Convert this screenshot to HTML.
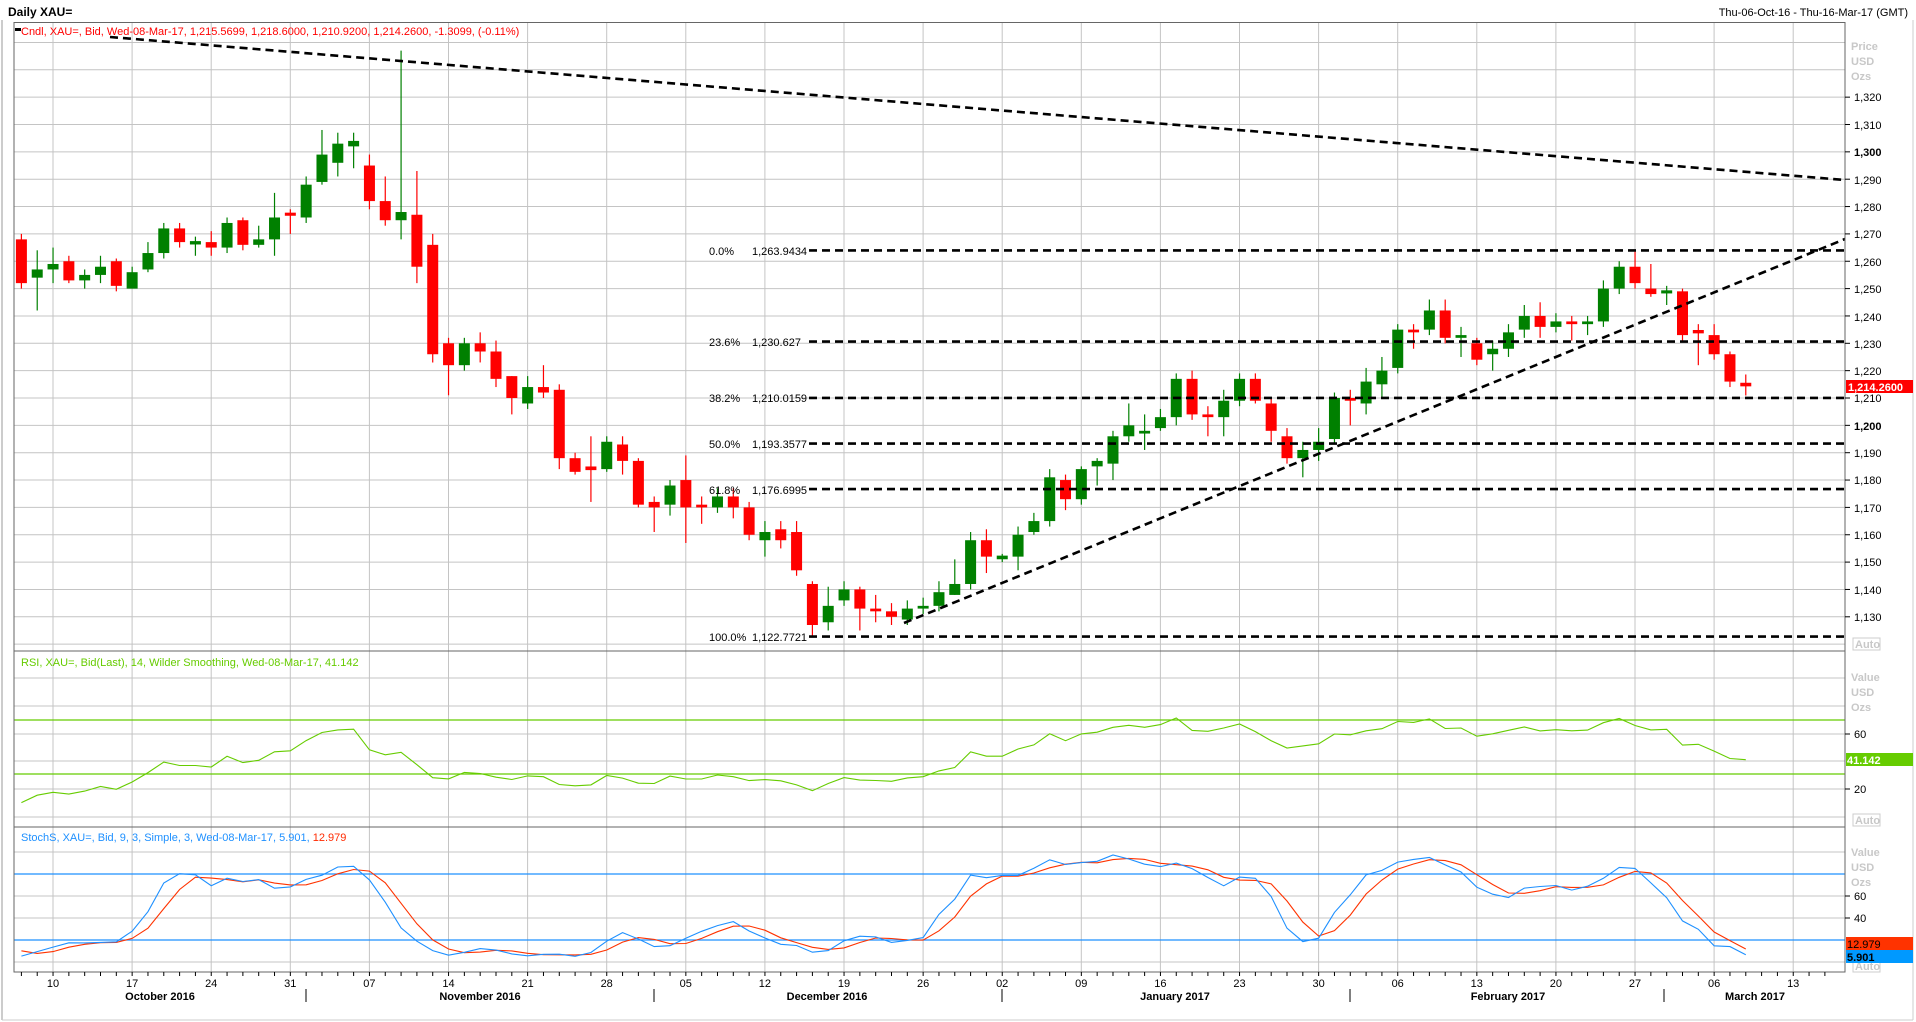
<!DOCTYPE html>
<html><head><meta charset="utf-8"><style>
html,body{margin:0;padding:0;background:#fff;width:1916px;height:1022px;overflow:hidden}
svg{display:block;font-family:"Liberation Sans",sans-serif}
</style></head><body>
<svg id="s" width="1916" height="1022" xmlns="http://www.w3.org/2000/svg">
<rect x="0" y="0" width="1916" height="1022" fill="#fff"/>
<line x1="2" y1="20" x2="2" y2="1020" stroke="#999"/>
<line x1="1913" y1="20" x2="1913" y2="1020" stroke="#ccc"/>
<line x1="2" y1="1020" x2="1913" y2="1020" stroke="#ccc"/>
<text x="8" y="16" font-size="12" font-weight="bold" fill="#000">Daily XAU=</text>
<text x="1908" y="16" font-size="11" fill="#000" text-anchor="end">Thu-06-Oct-16 - Thu-16-Mar-17 (GMT)</text>
<g id="grid"></g>
<g id="draw"></g>
<rect x="14" y="22.5" width="1831" height="949.5" fill="none" stroke="#666"/>
<line x1="14" y1="651" x2="1845" y2="651" stroke="#666"/>
<line x1="14" y1="827" x2="1845" y2="827" stroke="#666"/>
<rect x="15" y="28" width="6" height="3" fill="#000"/>
<text x="21" y="35" font-size="11" fill="#ff0000">Cndl, XAU=, Bid, Wed-08-Mar-17, 1,215.5699, 1,218.6000, 1,210.9200, 1,214.2600, -1.3099, (-0.11%)</text>
<text x="21" y="666" font-size="11" fill="#66cc00">RSI, XAU=, Bid(Last),  14, Wilder Smoothing, Wed-08-Mar-17, 41.142</text>
<text x="21" y="841" font-size="11" fill="#1e90ff">StochS, XAU=, Bid,  9, 3, Simple, 3, Wed-08-Mar-17, 5.901, <tspan fill="#ff2a00">12.979</tspan></text>
<g font-size="11" font-weight="bold" fill="#c8c8c8">
<text x="1851" y="50">Price</text><text x="1851" y="65">USD</text><text x="1851" y="80">Ozs</text>
<text x="1851" y="681">Value</text><text x="1851" y="696">USD</text><text x="1851" y="711">Ozs</text>
<text x="1851" y="856">Value</text><text x="1851" y="871">USD</text><text x="1851" y="886">Ozs</text>
</g>
<g font-size="11" fill="#c8c8c8" font-weight="bold">
<rect x="1853" y="638" width="27" height="12" fill="#fff" stroke="#ccc"/><text x="1855" y="648">Auto</text>
<rect x="1853" y="814" width="27" height="12" fill="#fff" stroke="#ccc"/><text x="1855" y="824">Auto</text>
<rect x="1853" y="960" width="27" height="12" fill="#fff" stroke="#ccc"/><text x="1855" y="970">Auto</text>
</g>
<g id="axis" font-size="11" fill="#000"></g>
<rect x="1846" y="380" width="67" height="13" fill="#ff0000"/>
<text x="1848" y="391" font-size="11" font-weight="bold" fill="#fff">1,214.2600</text>
<rect x="1846" y="753" width="67" height="13" fill="#66cc00"/>
<text x="1847" y="764" font-size="11" font-weight="bold" fill="#fff">41.142</text>
<rect x="1846" y="937" width="67" height="13" fill="#ff3300"/>
<text x="1847" y="948" font-size="11" fill="#000">12.979</text>
<rect x="1846" y="950" width="67" height="13" fill="#0099ff"/>
<text x="1847" y="961" font-size="11" font-weight="bold" fill="#000">5.901</text>
<g font-size="11" fill="#000">
<text x="709" y="255">0.0%</text><text x="752" y="255">1,263.9434</text>
<text x="709" y="346">23.6%</text><text x="752" y="346">1,230.627</text>
<text x="709" y="402">38.2%</text><text x="752" y="402">1,210.0159</text>
<text x="709" y="448">50.0%</text><text x="752" y="448">1,193.3577</text>
<text x="709" y="494">61.8%</text><text x="752" y="494">1,176.6995</text>
<text x="709" y="641">100.0%</text><text x="752" y="641">1,122.7721</text>
</g>
<g fill="#000" font-size="11">
<text x="1854" y="101">1,320</text><text x="1854" y="129">1,310</text><text x="1854" y="156" font-weight="bold">1,300</text>
<text x="1854" y="184">1,290</text><text x="1854" y="211">1,280</text><text x="1854" y="238">1,270</text>
<text x="1854" y="266">1,260</text><text x="1854" y="293">1,250</text><text x="1854" y="321">1,240</text>
<text x="1854" y="348">1,230</text><text x="1854" y="375">1,220</text><text x="1854" y="402">1,210</text>
<text x="1854" y="430" font-weight="bold">1,200</text><text x="1854" y="457">1,190</text><text x="1854" y="484">1,180</text>
<text x="1854" y="512">1,170</text><text x="1854" y="539">1,160</text><text x="1854" y="566">1,150</text>
<text x="1854" y="594">1,140</text><text x="1854" y="621">1,130</text>
<text x="1854" y="738">60</text><text x="1854" y="793">20</text>
<text x="1854" y="900">60</text><text x="1854" y="922">40</text>
</g>
<g fill="#000" font-size="11" font-weight="bold" text-anchor="middle">
<text x="160" y="1000">October 2016</text><text x="480" y="1000">November 2016</text>
<text x="827" y="1000">December 2016</text><text x="1175" y="1000">January 2017</text>
<text x="1508" y="1000">February 2017</text><text x="1755" y="1000">March 2017</text>
</g>
</svg>
<script>
var D=[
[1268,1270,1250,1252],[1254,1264,1242,1257],
[1257,1265,1252,1259],[1260,1262,1252,1253],[1253,1257,1250,1255],[1255,1262,1252,1258],[1260,1261,1249,1251],
[1250,1258,1250,1256],[1257,1267,1256,1263],[1263,1274,1261,1272],[1272,1274,1265,1267],[1266.5,1269,1262,1267],
[1267,1271,1262,1265],[1265,1276,1263,1274],[1275,1276,1264,1266],[1266,1273,1265,1268],[1268,1285,1262,1276],
[1277.4,1279,1270,1277],[1276,1291,1274,1288],[1289,1308,1288,1299],[1296,1307,1291,1303],[1302,1307,1294,1304],
[1295,1299,1279,1282],[1282,1291,1273,1275],[1275,1337,1268,1278],[1277,1293,1252,1258],[1266,1270,1223,1226],
[1230,1232,1211,1222],[1222,1232,1220,1230],[1230,1234,1223,1227],[1227,1231,1214,1217],[1218,1218,1204,1210],
[1208,1218,1206,1214],[1214,1222,1210,1212],[1213,1215,1184,1188],[1188,1190,1182,1183],[1184.6,1196,1172,1184],
[1184,1196,1183,1194],[1193,1196,1182,1187],[1187,1188,1170,1171],[1172,1174,1161,1170],[1171,1180,1167,1178],
[1180,1189,1157,1170],[1171,1174,1164,1170],[1170,1177,1168,1174],[1174,1177,1166,1170],[1170,1172,1158,1160],
[1158,1165,1152,1161],[1162,1165,1155,1158],[1161,1165,1145,1147],[1142,1143,1123,1127],[1128,1141,1125,1134],
[1136,1143,1134,1140],[1140,1141,1125,1133],[1133,1138,1128,1132],[1132,1135,1127,1130],[1129,1136,1127,1133],
[1133,1137,1131,1134],[1134,1143,1132,1139],[1138,1151,1138,1142],[1142,1161,1140,1158],[1158,1162,1146,1152],
[1151.4,1153,1150,1152],[1152,1163,1147,1160],[1161,1168,1160,1165],[1165,1184,1163,1181],[1180,1182,1169,1173],
[1173,1185,1171,1184],[1185,1188,1178,1187],[1186,1198,1180,1196],[1196,1208,1194,1200],[1197,1204,1191,1198],
[1199,1206,1198,1203],[1203,1219,1200,1217],[1217,1220,1202,1204],[1204,1207,1196,1203],[1203,1213,1196,1209],
[1209,1219,1207,1217],[1217,1219,1208,1209],[1208,1210,1194,1198],[1196,1199,1186,1188],[1188,1194,1181,1191],
[1191,1199,1187,1194],[1195,1212,1193,1210],[1210,1213,1200,1209],[1208,1221,1204,1216],[1215,1225,1210,1220],
[1221,1237,1219,1235],[1235,1237,1228,1234],[1235,1246,1233,1242],[1242,1246,1230,1232],[1232,1236,1225,1233],
[1230,1232,1222,1224],[1226,1231,1220,1228],[1228,1237,1225,1234],[1235,1244,1232,1240],[1240,1245,1232,1236],
[1236,1241,1234,1238],[1238,1240,1231,1237],[1237,1240,1233,1238],[1238,1253,1236,1250],[1250,1260,1248,1258],
[1258,1264,1250,1252],[1250,1259,1247,1248],[1248.6,1251,1244,1249],[1249,1250,1231,1233],[1234.5,1237,1222,1234],
[1233,1237,1224,1226],[1226,1227,1214,1216],[1215.57,1218.6,1210.92,1214.26]];
var PRE=[[1338,1320,1330],[1335,1318,1325],[1330,1315,1322],[1327,1312,1318],[1325,1310,1316],[1320,1300,1313],[1316,1304,1312],[1315,1290,1296],[1300,1262,1266],[1272,1262,1268]];
var NS="http://www.w3.org/2000/svg";
function el(p,t,a){var e=document.createElementNS(NS,t);for(var k in a)e.setAttribute(k,a[k]);p.appendChild(e);return e;}
var G=document.getElementById('grid'),W=document.getElementById('draw'),A=document.getElementById('axis');
function py(p){return 398-(p-1210)*2.735;}
function X(i){return 21.4+i*15.82;}
var gc="#c4c4c4";
for(var p=1120;p<=1340;p+=10){var y=py(p);if(y>23&&y<651)el(G,'line',{x1:14,x2:1845,y1:y,y2:y,stroke:gc});}
[678,706,734,761,789,817].forEach(function(y){el(G,'line',{x1:14,x2:1845,y1:y,y2:y,stroke:gc});});
[852,874,896,918,940,962].forEach(function(y){el(G,'line',{x1:14,x2:1845,y1:y,y2:y,stroke:gc});});
var labs=["10","17","24","31","07","14","21","28","05","12","19","26","02","09","16","23","30","06","13","20","27","06","13"];
for(var i=0;i<23;i++){var x=53+79.1*i;el(G,'line',{x1:x,x2:x,y1:23,y2:972,stroke:gc});
 var t=el(A,'text',{x:x,y:987,'text-anchor':'middle'});t.textContent=labs[i];}
for(var i=-2;i<115;i++){var x=21.4+i*15.82;if(x>14&&x<1845)el(A,'line',{x1:x,x2:x,y1:972,y2:976,stroke:'#000'});}
[306,654,1002,1350,1664].forEach(function(x){el(A,'line',{x1:x,x2:x,y1:989,y2:1002,stroke:'#000'});});
for(var p=1130;p<=1320;p+=10)el(A,'line',{x1:1845,x2:1850,y1:py(p),y2:py(p),stroke:'#000'});
[734,789,896,918].forEach(function(y){el(A,'line',{x1:1845,x2:1850,y1:y,y2:y,stroke:'#000'});});
D.forEach(function(d,i){var x=X(i),o=d[0],h=d[1],l=d[2],c=d[3];var col=c>=o?'#008000':'#ff0000';
 if(Math.abs(c-o)<0.3)col=(i==17||i==62)?'#ff0000':col;
 el(W,'line',{x1:x,x2:x,y1:py(h),y2:py(l),stroke:col,'stroke-width':1.2});
 var t=Math.min(py(o),py(c)),b=Math.max(py(o),py(c));if(b-t<2){t-=1;b+=1;}
 el(W,'rect',{x:x-5.5,y:t,width:11,height:b-t,fill:col});});
var ds={stroke:'#000','stroke-width':2.6,'stroke-dasharray':'8,5'};
function dl(x1,y1,x2,y2){var a={x1:x1,y1:y1,x2:x2,y2:y2};for(var k in ds)a[k]=ds[k];el(W,'line',a);}
dl(110,37,1845,180);dl(904,623,1845,239);
[1263.9434,1230.627,1210.0159,1193.3577,1176.6995,1122.7721].forEach(function(p){dl(809,py(p),1845,py(p));});
// full series with history
var H=[],L=[],C=[];
PRE.forEach(function(b){H.push(b[0]);L.push(b[1]);C.push(b[2]);});
D.forEach(function(d){H.push(d[1]);L.push(d[2]);C.push(d[3]);});
var off=PRE.length;
// RSI
el(W,'line',{x1:14,x2:1845,y1:720,y2:720,stroke:'#66cc00','stroke-width':1.2});
el(W,'line',{x1:14,x2:1845,y1:774,y2:774,stroke:'#66cc00','stroke-width':1.2});
var ag=1.0,al=1.6,pts=[];
for(var i=1;i<C.length;i++){var ch=C[i]-C[i-1];var g=ch>0?ch:0,lo=ch<0?-ch:0;ag=(ag*13+g)/14;al=(al*13+lo)/14;
 if(i>=off){var r=100-100/(1+ag/al);pts.push(X(i-off)+','+(789-(r-20)*1.375).toFixed(1));}}
el(W,'polyline',{points:pts.join(' '),fill:'none',stroke:'#66cc00','stroke-width':1.1});
// Stoch
el(W,'line',{x1:14,x2:1845,y1:874,y2:874,stroke:'#1e90ff','stroke-width':1.2});
el(W,'line',{x1:14,x2:1845,y1:940,y2:940,stroke:'#1e90ff','stroke-width':1.2});
var raw=[],K=[],Dd=[];
for(var i=0;i<C.length;i++){var hh=-1e9,ll=1e9;for(var j=Math.max(0,i-8);j<=i;j++){hh=Math.max(hh,H[j]);ll=Math.min(ll,L[j]);}
 raw.push(100*(C[i]-ll)/(hh-ll));}
function sma(a,i){var s=0,n=0;for(var j=Math.max(0,i-2);j<=i;j++){s+=a[j];n++;}return s/n;}
raw.forEach(function(v,i){K.push(sma(raw,i));});K.forEach(function(v,i){Dd.push(sma(K,i));});
function sy(v){return (962-v*1.1).toFixed(1);}
var pk=[],pd=[];
for(var i=off;i<C.length;i++){pk.push(X(i-off)+','+sy(K[i]));pd.push(X(i-off)+','+sy(Dd[i]));}
el(W,'polyline',{points:pd.join(' '),fill:'none',stroke:'#ff3300','stroke-width':1.1});
el(W,'polyline',{points:pk.join(' '),fill:'none',stroke:'#1e90ff','stroke-width':1.1});
</script>
</body></html>
